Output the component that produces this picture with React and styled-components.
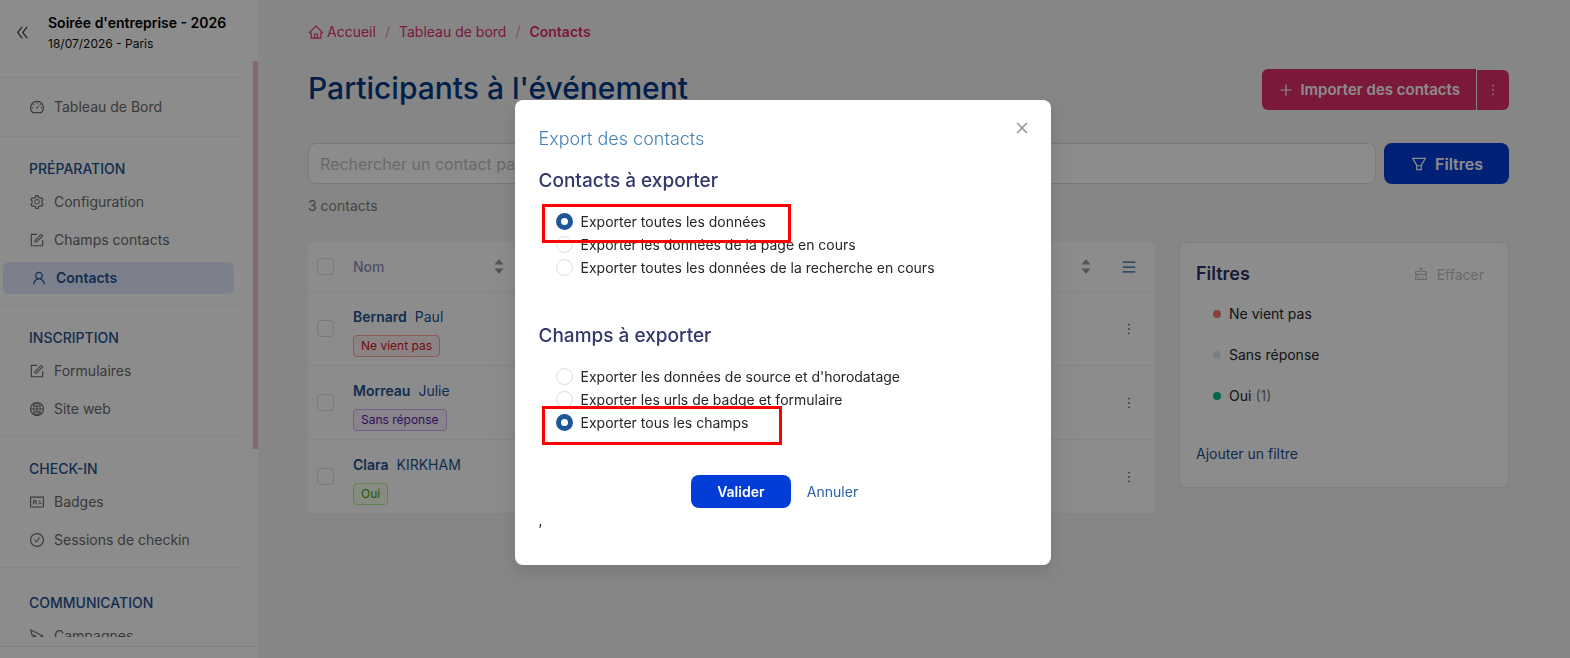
import React, { useState } from "react";
import styled, { createGlobalStyle } from "styled-components";
import {
  AiFillCaretDown,
  AiFillCaretUp,
  AiOutlineCheckCircle,
  AiOutlineClear,
  AiOutlineClose,
  AiOutlineDashboard,
  AiOutlineDoubleLeft,
  AiOutlineFilter,
  AiOutlineForm,
  AiOutlineGlobal,
  AiOutlineHome,
  AiOutlineIdcard,
  AiOutlineMenu,
  AiOutlineMore,
  AiOutlinePlus,
  AiOutlineSend,
  AiOutlineSetting,
  AiOutlineUser,
} from "react-icons/ai";

const GlobalStyle = createGlobalStyle`
  * {
    box-sizing: border-box;
  }

  body {
    margin: 0;
    font-family: "Inter", sans-serif;
    font-size: 14px;
    line-height: 20px;
    color: #262626;
    background: #f5f5f5;
  }

  button, input {
    font-family: inherit;
  }

  a {
    color: inherit;
    text-decoration: none;
  }

  svg {
    display: block;
    flex-shrink: 0;
  }
`;

const Page = styled.div`
  display: flex;
  height: 100vh;
  overflow: hidden;
`;

/* Sidebar */
const Sidebar = styled.aside`
  display: flex;
  flex-direction: column;
  flex: 0 0 258px;
  background: #fff;
`;

const SidebarHead = styled.div`
  display: flex;
  align-items: center;
  gap: 17px;
  height: 61px;
  padding: 4px 0 0 14px;
`;

const CollapseButton = styled.button`
  padding: 0;
  border: 0;
  background: none;
  color: #444;
  font-size: 17px;
`;

const EventName = styled.div`
  font-size: 14px;
  line-height: 22px;
  font-weight: 600;
  color: #000;
`;

const EventDate = styled.div`
  font-size: 12px;
  line-height: 20px;
  color: #111;
`;

const SidebarScroll = styled.div`
  display: flex;
  justify-content: space-between;
  flex: 1;
  min-height: 0;
  overflow: hidden;
`;

const Nav = styled.nav`
  flex: 0 0 244px;
  padding-top: 16px;
`;

const ScrollThumb = styled.div`
  width: 5px;
  height: 388px;
  background: #ffb6cf;
`;

const SidebarFoot = styled.div`
  height: 12px;
  margin-top: 9px;
  border-top: 1px solid #eaeaea;
`;

const NavGroup = styled.div`
  padding: ${({ $single }) => ($single ? "10px 0" : "22px 0 8px")};
  border-top: 1px solid #f0f0f0;

  &:last-child {
    padding-top: 25px;
  }
`;

const NavTitle = styled.div`
  margin-bottom: 4px;
  padding-left: 29px;
  font-size: 14px;
  font-weight: 500;
  text-transform: uppercase;
  color: #1f5291;
`;

const NavItem = styled.a`
  display: flex;
  align-items: center;
  gap: 9px;
  height: ${({ $active }) => ($active ? "32px" : "38px")};
  margin: ${({ $active }) => ($active ? "3px 10px 3px 3px" : "0")};
  padding-left: ${({ $active }) => ($active ? "28px" : "29px")};
  border-radius: 6px;
  font-weight: ${({ $active }) => ($active ? 600 : 400)};
  color: ${({ $active }) => ($active ? "#1f5291" : "#6b6b6b")};
  background: ${({ $active }) => ($active ? "#e1e9ff" : "transparent")};

  svg {
    font-size: 16px;
  }
`;

/* Main */
const Main = styled.main`
  flex: 1;
  min-width: 0;
  padding: 20px 61px 0 50px;
`;

const Breadcrumb = styled.nav`
  display: flex;
  align-items: center;
  gap: 9px;
  height: 24px;
  color: #e02e6c;
`;

const Crumb = styled.a`
  display: flex;
  align-items: center;
  gap: 3px;
  font-weight: ${({ $current }) => ($current ? 600 : 400)};

  svg {
    font-size: 16px;
  }
`;

const Separator = styled.span`
  color: #e58fae;
`;

const TitleRow = styled.div`
  display: flex;
  align-items: flex-start;
  justify-content: space-between;
  margin-top: 25px;
`;

const Title = styled.h1`
  margin: 0;
  font-size: 30px;
  line-height: 38px;
  font-weight: 500;
  color: #003a86;
`;

const ButtonGroup = styled.div`
  display: flex;
  align-items: center;
  gap: 1px;
`;

const ImportButton = styled.button`
  display: flex;
  align-items: center;
  gap: 6px;
  height: 41px;
  padding: 0 16px;
  border: 0;
  border-radius: 6px 0 0 6px;
  font-size: 15px;
  font-weight: 600;
  color: #fff;
  background: #e02e6c;
`;

const ImportMore = styled.button`
  display: flex;
  align-items: center;
  justify-content: center;
  width: 32px;
  height: 40px;
  padding: 0;
  border: 0;
  border-radius: 0 6px 6px 0;
  font-size: 16px;
  color: #fff;
  background: #e02e6c;
`;

const SearchRow = styled.div`
  display: flex;
  gap: 8px;
  margin-top: 33px;
`;

const SearchInput = styled.input`
  flex: 1;
  min-width: 0;
  height: 41px;
  padding: 0 11px;
  border: 1px solid #dcdcdc;
  border-radius: 8px;
  font-size: 16px;
  background: #fff;

  &::placeholder {
    color: #bfbfbf;
  }
`;

const FilterButton = styled.button`
  display: flex;
  align-items: center;
  justify-content: center;
  gap: 7px;
  width: 125px;
  height: 41px;
  border: 0;
  border-radius: 8px;
  font-size: 16px;
  font-weight: 600;
  color: #fff;
  background: #033dd8;
`;

const Count = styled.div`
  margin-top: 12px;
  color: #7d7d7d;
`;

const Content = styled.div`
  display: flex;
  align-items: flex-start;
  gap: 24px;
  margin-top: 26px;
`;

const Table = styled.table`
  flex: 1;
  min-width: 0;
  width: 100%;
  table-layout: fixed;
  border-spacing: 0;
  border-radius: 8px 8px 0 0;
  background: #fff;
`;

const Th = styled.th`
  width: ${({ $width }) => $width || "auto"};
  height: 50px;
  padding: 0 10px 0 0;
  border-bottom: 1px solid #f0f0f0;
  text-align: left;
  font-weight: 500;
  color: #8d93c1;
`;

const Td = styled.td`
  height: 74px;
  padding: ${({ $name }) => ($name ? "6px 0 0" : "0")};
  border-bottom: 1px solid #f0f0f0;
`;

const HeadCell = styled.div`
  display: flex;
  align-items: center;
  justify-content: space-between;
`;

const Sorter = styled.span`
  display: flex;
  flex-direction: column;
  margin-left: auto;
  font-size: 12px;
  color: #999;

  svg + svg {
    margin-top: -3px;
  }
`;

const Checkbox = styled.input`
  appearance: none;
  display: block;
  width: 17px;
  height: 17px;
  margin: 0 0 0 9px;
  border: 1px solid #dcdcdc;
  border-radius: 4px;
  background: #fff;
`;

const Person = styled.a`
  display: flex;
  gap: 8px;
  margin-bottom: 8px;
  color: #1f5291;

  strong {
    font-weight: 600;
  }
`;

const tagColors = {
  red: { text: "#cf1322", border: "#ffa39e", background: "#fff1f0" },
  purple: { text: "#531dab", border: "#d3adf7", background: "#f9f0ff" },
  green: { text: "#389e0d", border: "#b7eb8f", background: "#f6ffed" },
};

const Tag = styled.span`
  display: inline-block;
  padding: 0 7px;
  border: 1px solid ${({ $color }) => tagColors[$color].border};
  border-radius: 4px;
  font-size: 12px;
  line-height: 20px;
  color: ${({ $color }) => tagColors[$color].text};
  background: ${({ $color }) => tagColors[$color].background};
`;

const IconButton = styled.button`
  display: block;
  margin: 0 0 0 auto;
  padding: 0 8px;
  border: 0;
  font-size: 16px;
  color: #2d62a3;
  background: none;
`;

const ActionCell = styled.div`
  padding-right: ${({ $head }) => ($head ? "0" : "10px")};
`;

const FilterPanel = styled.section`
  flex: 0 0 330px;
  height: 246px;
  padding: 19px 24px 0 16px;
  border: 1px solid #eaeaea;
  border-radius: 8px;
  background: #fff;
`;

const PanelHead = styled.div`
  display: flex;
  align-items: flex-start;
  justify-content: space-between;
`;

const PanelTitle = styled.h2`
  margin: 0;
  font-size: 18px;
  line-height: 24px;
  font-weight: 600;
  color: #2c3166;
`;

const ClearButton = styled.button`
  display: flex;
  align-items: center;
  gap: 8px;
  height: 24px;
  padding: 0;
  border: 0;
  font-size: 14px;
  color: #bfbfbf;
  background: none;

  svg {
    font-size: 16px;
  }
`;

const StatusList = styled.ul`
  display: grid;
  gap: 21px;
  margin: 18px 0 0;
  padding: 0 0 0 17px;
  list-style: none;
`;

const Status = styled.li`
  display: flex;
  align-items: center;
  gap: 8px;

  &::before {
    content: "";
    width: 8px;
    height: 8px;
    border-radius: 50%;
    background: ${({ $dot }) => $dot};
  }

  span {
    margin-left: -4px;
    color: #7c7c8c;
  }
`;

const AddFilter = styled.a`
  display: block;
  margin-top: 38px;
  color: #1f5291;
`;

/* Modal */
const Backdrop = styled.div`
  position: fixed;
  inset: 0;
  display: flex;
  align-items: flex-start;
  justify-content: center;
  padding: 100px 5px 0 0;
  background: rgba(0, 0, 0, 0.45);
`;

const Dialog = styled.div`
  position: relative;
  width: 536px;
  padding: 27px 24px 35px;
  border-radius: 8px;
  background: #fff;
  box-shadow: 0 6px 16px rgba(0, 0, 0, 0.08), 0 9px 28px 8px rgba(0, 0, 0, 0.05);
`;

const CloseButton = styled.button`
  position: absolute;
  top: 20px;
  right: 21px;
  padding: 0;
  border: 0;
  font-size: 16px;
  color: #8c8c8c;
  background: none;
`;

const DialogTitle = styled.h2`
  margin: 0 0 18px;
  font-size: 18px;
  line-height: 24px;
  font-weight: 300;
  color: #4580b8;
`;

const Fieldset = styled.fieldset`
  min-width: 0;
  margin: 0;
  padding: 0;
  border: 0;

  & + & {
    margin-top: 45px;
  }
`;

const Legend = styled.legend`
  margin-bottom: 17px;
  padding: 0;
  font-size: 19px;
  line-height: 24px;
  font-weight: 500;
  color: #32376c;
`;

const RadioLabel = styled.label`
  position: relative;
  display: flex;
  align-items: center;
  gap: 8px;
  height: 23px;
  padding-left: 17px;
`;

const Radio = styled.input`
  appearance: none;
  width: 17px;
  height: 17px;
  margin: 0;
  border: 1px solid #dcdcdc;
  border-radius: 50%;
  background: #fff;

  &:checked {
    border: 5px solid #1f5796;
  }
`;

/* red frame drawn over the option it points at */
const Highlight = styled.span`
  position: absolute;
  z-index: 1;
  top: ${({ $top }) => $top};
  left: 3px;
  width: ${({ $width }) => $width};
  height: 39px;
  border: 3px solid #f00;
  pointer-events: none;
`;

const Actions = styled.div`
  display: flex;
  align-items: center;
  justify-content: center;
  margin-top: 41px;
`;

const SubmitButton = styled.button`
  width: 100px;
  height: 33px;
  border: 0;
  border-radius: 8px;
  font-size: 14px;
  font-weight: 600;
  color: #fff;
  background: #033dd8;
`;

const CancelLink = styled.a`
  padding: 0 16px;
  color: #2d62a3;
`;

const Trailing = styled.div`
  margin-top: 2px;
`;

const navGroups = [
  {
    title: "Préparation",
    items: [
      { label: "Configuration", Icon: AiOutlineSetting },
      { label: "Champs contacts", Icon: AiOutlineForm },
      { label: "Contacts", Icon: AiOutlineUser, active: true },
    ],
  },
  {
    title: "Inscription",
    items: [
      { label: "Formulaires", Icon: AiOutlineForm },
      { label: "Site web", Icon: AiOutlineGlobal },
    ],
  },
  {
    title: "Check-in",
    items: [
      { label: "Badges", Icon: AiOutlineIdcard },
      { label: "Sessions de checkin", Icon: AiOutlineCheckCircle },
    ],
  },
  {
    title: "Communication",
    items: [{ label: "Campagnes", Icon: AiOutlineSend }],
  },
];

const contacts = [
  { last: "Bernard", first: "Paul", status: "Ne vient pas", color: "red" },
  { last: "Morreau", first: "Julie", status: "Sans réponse", color: "purple" },
  { last: "Clara", first: "KIRKHAM", status: "Oui", color: "green" },
];

const contactOptions = [
  { id: "all", label: "Exporter toutes les données", frame: { top: "-6px", width: "249px" } },
  { id: "page", label: "Exporter les données de la page en cours" },
  { id: "search", label: "Exporter toutes les données de la recherche en cours" },
];

const fieldOptions = [
  { id: "source", label: "Exporter les données de source et d'horodatage" },
  { id: "urls", label: "Exporter les urls de badge et formulaire" },
  { id: "fields", label: "Exporter tous les champs", frame: { top: "-5px", width: "240px" } },
];

function SortIcon() {
  return (
    <Sorter>
      <AiFillCaretUp />
      <AiFillCaretDown />
    </Sorter>
  );
}

function RadioGroup({ legend, name, options, value, onChange }) {
  return (
    <Fieldset>
      <Legend>{legend}</Legend>
      {options.map((option) => (
        <RadioLabel key={option.id}>
          <Radio
            type="radio"
            name={name}
            checked={value === option.id}
            onChange={() => onChange(option.id)}
          />
          {option.label}
          {option.frame && <Highlight $top={option.frame.top} $width={option.frame.width} />}
        </RadioLabel>
      ))}
    </Fieldset>
  );
}

function ExportModal() {
  const [rows, setRows] = useState("all");
  const [fields, setFields] = useState("fields");

  return (
    <Backdrop>
      <Dialog role="dialog" aria-modal="true" aria-labelledby="export-title">
        <CloseButton aria-label="Fermer">
          <AiOutlineClose />
        </CloseButton>
        <DialogTitle id="export-title">Export des contacts</DialogTitle>
        <RadioGroup
          legend="Contacts à exporter"
          name="rows"
          options={contactOptions}
          value={rows}
          onChange={setRows}
        />
        <RadioGroup
          legend="Champs à exporter"
          name="fields"
          options={fieldOptions}
          value={fields}
          onChange={setFields}
        />
        <Actions>
          <SubmitButton>Valider</SubmitButton>
          <CancelLink href="#">Annuler</CancelLink>
        </Actions>
        <Trailing>,</Trailing>
      </Dialog>
    </Backdrop>
  );
}

export default function App() {
  return (
    <>
      <GlobalStyle />
      <Page>
        <Sidebar>
          <SidebarHead>
            <CollapseButton aria-label="Réduire le menu">
              <AiOutlineDoubleLeft />
            </CollapseButton>
            <div>
              <EventName>Soirée d'entreprise - 2026</EventName>
              <EventDate>18/07/2026 - Paris</EventDate>
            </div>
          </SidebarHead>
          <SidebarScroll>
            <Nav>
              <NavGroup $single>
                <NavItem href="#">
                  <AiOutlineDashboard />
                  Tableau de Bord
                </NavItem>
              </NavGroup>
              {navGroups.map((group) => (
                <NavGroup key={group.title}>
                  <NavTitle>{group.title}</NavTitle>
                  {group.items.map(({ label, Icon, active }) => (
                    <NavItem href="#" key={label} $active={active}>
                      <Icon />
                      {label}
                    </NavItem>
                  ))}
                </NavGroup>
              ))}
            </Nav>
            <ScrollThumb />
          </SidebarScroll>
          <SidebarFoot />
        </Sidebar>

        <Main>
          <Breadcrumb>
            <Crumb href="#">
              <AiOutlineHome />
              Accueil
            </Crumb>
            <Separator>/</Separator>
            <Crumb href="#">Tableau de bord</Crumb>
            <Separator>/</Separator>
            <Crumb href="#" $current>
              Contacts
            </Crumb>
          </Breadcrumb>

          <TitleRow>
            <Title>Participants à l'événement</Title>
            <ButtonGroup>
              <ImportButton>
                <AiOutlinePlus size={16} />
                Importer des contacts
              </ImportButton>
              <ImportMore aria-label="Plus d'actions">
                <AiOutlineMore />
              </ImportMore>
            </ButtonGroup>
          </TitleRow>

          <SearchRow>
            <SearchInput
              type="text"
              aria-label="Rechercher un contact"
              placeholder="Rechercher un contact par nom"
            />
            <FilterButton>
              <AiOutlineFilter size={18} />
              Filtres
            </FilterButton>
          </SearchRow>

          <Count>3 contacts</Count>

          <Content>
            <Table>
              <thead>
                <tr>
                  <Th $width="45px">
                    <Checkbox type="checkbox" aria-label="Tout sélectionner" />
                  </Th>
                  <Th $width="162px">
                    <HeadCell>
                      Nom
                      <SortIcon />
                    </HeadCell>
                  </Th>
                  <Th>
                    <HeadCell>
                      <SortIcon />
                    </HeadCell>
                  </Th>
                  <Th $width="53px">
                    <ActionCell $head>
                      <IconButton aria-label="Colonnes">
                        <AiOutlineMenu />
                      </IconButton>
                    </ActionCell>
                  </Th>
                </tr>
              </thead>
              <tbody>
                {contacts.map((contact) => (
                  <tr key={contact.last}>
                    <Td>
                      <Checkbox type="checkbox" aria-label={contact.last} />
                    </Td>
                    <Td $name>
                      <Person href="#">
                        <strong>{contact.last}</strong>
                        {contact.first}
                      </Person>
                      <Tag $color={contact.color}>{contact.status}</Tag>
                    </Td>
                    <Td />
                    <Td>
                      <ActionCell>
                        <IconButton aria-label="Actions">
                          <AiOutlineMore />
                        </IconButton>
                      </ActionCell>
                    </Td>
                  </tr>
                ))}
              </tbody>
            </Table>

            <FilterPanel>
              <PanelHead>
                <PanelTitle>Filtres</PanelTitle>
                <ClearButton>
                  <AiOutlineClear />
                  Effacer
                </ClearButton>
              </PanelHead>
              <StatusList>
                <Status $dot="#f2796f">Ne vient pas</Status>
                <Status $dot="#e3e5ea">Sans réponse</Status>
                <Status $dot="#04c083">
                  Oui <span>(1)</span>
                </Status>
              </StatusList>
              <AddFilter href="#">Ajouter un filtre</AddFilter>
            </FilterPanel>
          </Content>
        </Main>
      </Page>
      <ExportModal />
    </>
  );
}
